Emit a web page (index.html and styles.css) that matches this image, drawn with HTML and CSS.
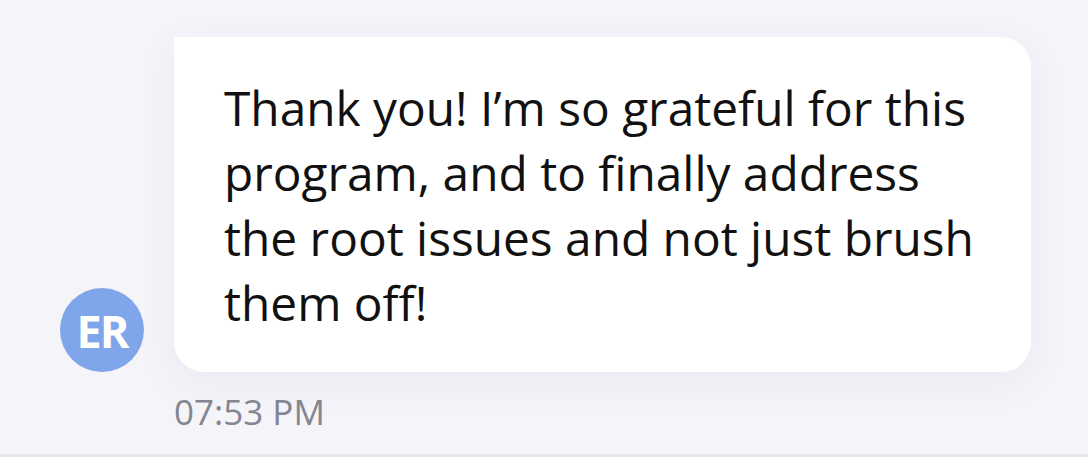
FILE: index.html
```html
<!DOCTYPE html>
<html>
<head>
<meta charset="utf-8">
<link rel="stylesheet" href="styles.css">
</head>
<body>
<div class="screen">
  <div class="thread">
    <div class="message">
      <div class="avatar">ER</div>
      <div class="content">
        <div class="bubble">Thank you! I’m so grateful for this program, and to finally address the root issues and not just brush them off!</div>
      </div>
    </div>
    <div class="time">07:53 PM</div>
  </div>
  <div class="bottom-rule"></div>
</div>
</body>
</html>
```
FILE: styles.css
```css
html, body {
  margin: 0;
  padding: 0;
}
body {
  background: #f4f4f9;
  font-family: "Open Sans", "Noto Sans", sans-serif;
  width: 1088px;
  height: 457px;
  overflow: hidden;
}
.screen {
  display: flex;
  flex-direction: column;
  height: 457px;
}
.thread {
  flex: 1;
  padding: 37px 0 0 60px;
}
.message {
  display: flex;
  align-items: flex-end;
  gap: 30px;
}
.avatar {
  width: 84px;
  height: 84px;
  border-radius: 50%;
  background: #7fa6ea;
  color: #ffffff;
  font-weight: 700;
  font-size: 45px;
  letter-spacing: -2px;
  display: flex;
  align-items: center;
  justify-content: center;
  flex-shrink: 0;
}
.bubble {
  width: 857px;
  box-sizing: border-box;
  background: #ffffff;
  border-radius: 0 30px 30px 30px;
  padding: 38px 40px 37px 50px;
  font-size: 47.8px;
  line-height: 65px;
  color: #111111;
  box-shadow: 0 10px 40px rgba(60, 60, 130, 0.06);
}
.time {
  margin: 20px 0 0 114px;
  font-size: 35px;
  line-height: 40px;
  color: #838591;
}
.bottom-rule {
  height: 3px;
  background: #e6e7ec;
}
```
